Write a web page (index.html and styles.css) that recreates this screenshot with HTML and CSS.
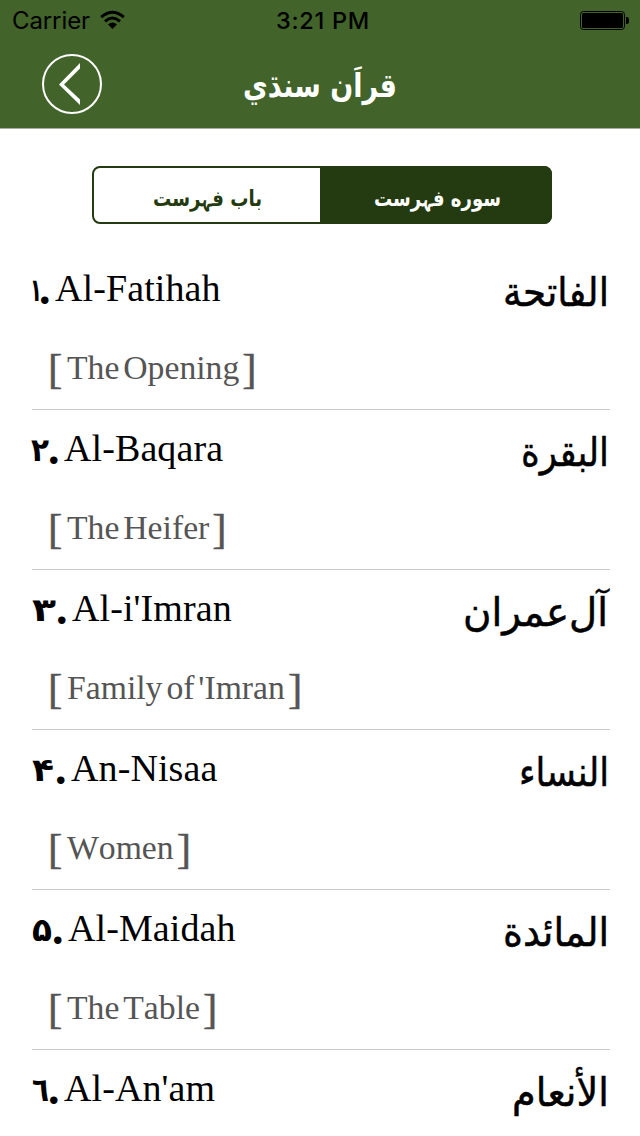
FILE: index.html
```html
<!DOCTYPE html>
<html lang="sd">
<head>
<meta charset="utf-8">
<title>قرآن سنڌي</title>
<link rel="stylesheet" href="styles.css">
</head>
<body>
<header class="header">
  <div class="status">
    <div class="carrier"><span>Carrier</span>
      <svg class="wifi" width="25" height="19" viewBox="0 0 25 19"><path d="M1.200 6.200Q12.500-3.800 23.800 6.200M5 10.300Q12.500 3.800 20 10.300" fill="none" stroke="#000" stroke-width="3"/><path d="M8 13.400Q12.500 9.500 17 13.400L12.500 18Z"/></svg>
    </div>
    <div class="time">3:21 PM</div>
    <svg class="battery" width="49" height="19" viewBox="0 0 49 19"><rect x=".5" y=".5" width="44" height="18" rx="3" fill="none" stroke="#000"/><rect x="2" y="2" width="41" height="15" rx="1.500"/><path d="M46 6h1q2 0 2 3.500t-2 3.500h-1z"/></svg>
  </div>
  <div class="nav">
    <svg class="back" width="60" height="60" viewBox="0 0 60 60"><circle cx="30" cy="30" r="29" fill="none" stroke="#fff" stroke-width="2"/><path d="M38 9V14.500L22 30.500L38 45.500V51L17 30.500Z" fill="#fff"/></svg>
    <h1 class="heading"><svg width="160" height="60"><text class="ar" x="157" y="43" font-size="33" textLength="154" lengthAdjust="spacingAndGlyphs">قراَن سنڌي</text></svg></h1>
  </div>
</header>
<main>
  <div class="tabs">
    <div class="tab"><svg width="117" height="40"><text class="ar" x="113" y="27" font-size="22" textLength="109" lengthAdjust="spacingAndGlyphs">باب فہرست</text></svg></div>
    <div class="tab active"><svg width="134" height="40"><text class="ar" x="131" y="27" font-size="22" textLength="127" lengthAdjust="spacingAndGlyphs">سوره فہرست</text></svg></div>
  </div>
  <ul class="list">
    <li class="row"><div class="title"><svg class="num" width="8" height="46"><text class="digit" x="-2" y="36" textLength="12" lengthAdjust="spacingAndGlyphs">۱</text></svg><span class="dot">.</span><span class="name">Al-Fatihah</span><svg class="arabic" width="160" height="60"><text class="ar" x="159" y="45" font-size="40" textLength="106" lengthAdjust="spacingAndGlyphs">الفاتحة</text></svg></div>
      <div class="sub"><span class="br">[</span><span class="meaning">The Opening</span><span class="br">]</span></div></li>
    <li class="row"><div class="title"><svg class="num" width="17" height="46"><text class="digit" x="-1" y="36" textLength="18" lengthAdjust="spacingAndGlyphs">۲</text></svg><span class="dot">.</span><span class="name">Al-Baqara</span><svg class="arabic" width="160" height="60"><text class="ar" x="159" y="45" font-size="40" textLength="88" lengthAdjust="spacingAndGlyphs">البقرة</text></svg></div>
      <div class="sub"><span class="br">[</span><span class="meaning">The Heifer</span><span class="br">]</span></div></li>
    <li class="row"><div class="title"><svg class="num" width="25" height="46"><text class="digit" x="0" y="36" textLength="24" lengthAdjust="spacingAndGlyphs">۳</text></svg><span class="dot">.</span><span class="name">Al-i'Imran</span><svg class="arabic" width="160" height="60"><text class="ar" x="158" y="45" font-size="40" textLength="145" lengthAdjust="spacingAndGlyphs">آل‌عمران</text></svg></div>
      <div class="sub"><span class="br">[</span><span class="meaning">Family of 'Imran</span><span class="br">]</span></div></li>
    <li class="row"><div class="title"><svg class="num" width="24" height="46"><text class="digit" x="0" y="36" textLength="22" lengthAdjust="spacingAndGlyphs">۴</text></svg><span class="dot">.</span><span class="name">An-Nisaa</span><svg class="arabic" width="160" height="60"><text class="ar" x="159" y="45" font-size="40" textLength="90" lengthAdjust="spacingAndGlyphs">النساء</text></svg></div>
      <div class="sub"><span class="br">[</span><span class="meaning">Women</span><span class="br">]</span></div></li>
    <li class="row"><div class="title"><svg class="num" width="21" height="46"><text class="digit" x="0" y="36" textLength="20" lengthAdjust="spacingAndGlyphs">۵</text></svg><span class="dot">.</span><span class="name">Al-Maidah</span><svg class="arabic" width="160" height="60"><text class="ar" x="159" y="45" font-size="40" textLength="106" lengthAdjust="spacingAndGlyphs">المائدة</text></svg></div>
      <div class="sub"><span class="br">[</span><span class="meaning">The Table</span><span class="br">]</span></div></li>
    <li class="row"><div class="title"><svg class="num" width="17" height="46"><text class="digit" x="0" y="36" textLength="17" lengthAdjust="spacingAndGlyphs">٦</text></svg><span class="dot">.</span><span class="name">Al-An'am</span><svg class="arabic" width="160" height="60"><text class="ar" x="159" y="45" font-size="40" textLength="97" lengthAdjust="spacingAndGlyphs">الأنعام</text></svg></div></li>
  </ul>
</main>
</body>
</html>
```
FILE: styles.css
```css
* { box-sizing: border-box; }
body { margin: 0; width: 640px; height: 1136px; overflow: hidden; background: #fff; color: #000; font-family: "Liberation Serif", "Times New Roman", serif; }
svg { display: block; flex: none; overflow: visible; }
.header { height: 129px; background: #42632a; border-bottom: 1px solid #a6aaa3; }
.status { height: 40px; padding: 0 11px 0 12px; display: grid; grid-template-columns: 1fr auto 1fr; align-items: center; font: 24px/40px Inter, Roboto, sans-serif; }
.carrier { display: flex; align-items: center; gap: 10px; letter-spacing: -.1px; padding-top: 1px; }
.wifi { margin-top: -1px; }
.time { font-weight: 500; font-size: 23.500px; letter-spacing: .7px; margin-left: 5px; padding-top: 1px; }
.battery { justify-self: end; }
.nav { display: grid; grid-template-columns: 102px 1fr 102px; padding-top: 14px; }
.back { margin-left: 42px; }
.heading { margin: 0; display: flex; justify-content: center; }
.ar { font-family: "DejaVu Sans", sans-serif; direction: rtl; fill: currentColor; }
.heading .ar { fill: #fff; font-weight: 700; }
.tabs { display: flex; width: 460px; height: 58px; margin: 37px 0 0 92px; border: 2px solid #243a10; border-radius: 8px; }
.tab { flex: 0 0 226px; display: flex; justify-content: center; padding-top: 11px; color: #243a10; font-weight: 700; }
.tab.active { flex: 1; margin: -2px -2px -2px 0; padding: 13px 0 0 2px; border-radius: 0 8px 8px 0; background: #243a10; color: #fff; }
.list { list-style: none; margin: 26px 30px 0 32px; padding: 0; }
.row { height: 160px; padding-top: 15px; border-bottom: 1px solid #c8c7cc; }
.row:last-child { height: 86px; border-bottom: 0; }
.title { display: flex; height: 46px; font-size: 38px; line-height: 47px; letter-spacing: .1px; white-space: nowrap; }
.digit { font: 700 32px "DejaVu Sans", sans-serif; }
.dot { flex: none; width: 15px; font: 700 46px/48px "Liberation Serif", serif; text-indent: -1px; }
.arabic { margin: -4px 0 0 auto; stroke: #000; stroke-width: .5px; letter-spacing: 0; }
.sub { display: flex; height: 40px; margin: 37px 0 0 16px; font-size: 33.700px; line-height: 40px; color: #555; white-space: nowrap; font-kerning: none; }
.br { font-size: 43px; width: 14px; line-height: 41px; -webkit-text-stroke: .5px #555; }
.meaning { margin: 0 3px 0 5px; word-spacing: -4.500px; }
```
